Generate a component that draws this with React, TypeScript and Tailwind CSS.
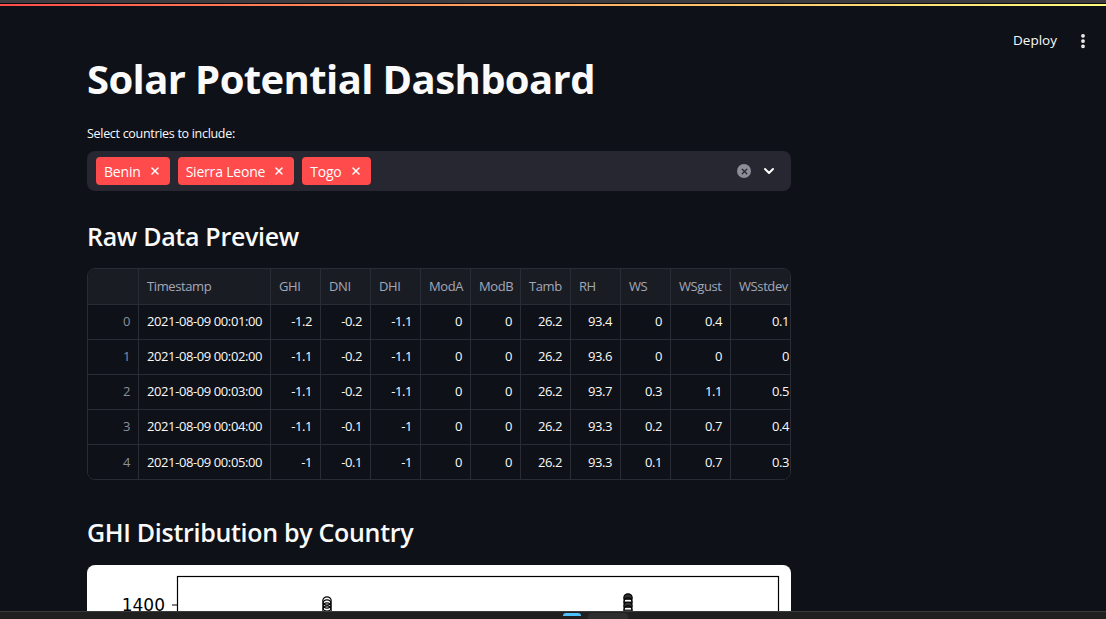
import { X, ChevronDown, EllipsisVertical } from 'lucide-react';

const columns = [
    { key: 'idx', label: '', w: 'w-[51px]' },
    { key: 'Timestamp', label: 'Timestamp', w: 'w-[132px]' },
    { key: 'GHI', label: 'GHI', w: 'w-[50px]' },
    { key: 'DNI', label: 'DNI', w: 'w-[50px]' },
    { key: 'DHI', label: 'DHI', w: 'w-[50px]' },
    { key: 'ModA', label: 'ModA', w: 'w-[50px]' },
    { key: 'ModB', label: 'ModB', w: 'w-[50px]' },
    { key: 'Tamb', label: 'Tamb', w: 'w-[50px]' },
    { key: 'RH', label: 'RH', w: 'w-[50px]' },
    { key: 'WS', label: 'WS', w: 'w-[50px]' },
    { key: 'WSgust', label: 'WSgust', w: 'w-[60px]' },
    { key: 'WSstdev', label: 'WSstdev', w: 'w-[66px]' },
];

const rows = [
    ['0', '2021-08-09 00:01:00', '-1.2', '-0.2', '-1.1', '0', '0', '26.2', '93.4', '0', '0.4', '0.1'],
    ['1', '2021-08-09 00:02:00', '-1.1', '-0.2', '-1.1', '0', '0', '26.2', '93.6', '0', '0', '0'],
    ['2', '2021-08-09 00:03:00', '-1.1', '-0.2', '-1.1', '0', '0', '26.2', '93.7', '0.3', '1.1', '0.5'],
    ['3', '2021-08-09 00:04:00', '-1.1', '-0.1', '-1', '0', '0', '26.2', '93.3', '0.2', '0.7', '0.4'],
    ['4', '2021-08-09 00:05:00', '-1', '-0.1', '-1', '0', '0', '26.2', '93.3', '0.1', '0.7', '0.3'],
];

const countries = ['Benin', 'Sierra Leone', 'Togo'];

const Tag = ({ name }: { name: string }) => (
    <div className="flex items-center h-[28px] pl-[8px] pr-[9px] rounded-[4px] bg-[#ff4b4b] text-white text-[14px] tracking-[-0.2px]">
        <span>{name}</span>
        <X size={12} strokeWidth={3} className="ml-[8px]" />
    </div>
);

const DataTable = () => (
    <div className="w-[704px] h-[212px] overflow-hidden rounded-[8px] border border-[#2a2c35] text-[13px] tracking-[-0.4px] whitespace-nowrap">
        <div className="flex h-[36px] bg-[#1a1c24] border-b border-[#2a2c35]">
            {columns.map((c, i) => (
                <div
                    key={c.key}
                    className={`${c.w} shrink-0 flex items-center px-[8px] overflow-hidden text-[#a3a8b8] ${i < columns.length - 1 ? 'border-r border-[#2a2c35]' : ''}`}
                >
                    {c.label}
                </div>
            ))}
        </div>
        {rows.map((r, ri) => (
            <div key={ri} className={`flex h-[35px] bg-[#0e1117] ${ri < rows.length - 1 ? 'border-b border-[#2a2c35]' : ''}`}>
                {r.map((v, ci) => (
                    <div
                        key={ci}
                        className={`${columns[ci].w} shrink-0 flex items-center px-[8px] overflow-hidden ${ci === 1 ? 'justify-start' : 'justify-end'} ${ci === 0 ? 'text-[#8b8f9c]' : 'text-[#fafafa]'} ${ci < r.length - 1 ? 'border-r border-[#2a2c35]' : ''}`}
                    >
                        {v}
                    </div>
                ))}
            </div>
        ))}
    </div>
);

const ChartPreview = () => (
    <div className="w-[704px] h-[60px] bg-white rounded-t-[8px] overflow-hidden">
        <svg width="704" height="60" viewBox="0 0 704 60">
            <rect x="90.5" y="11.5" width="601" height="60" fill="none" stroke="#000" strokeWidth="1.2" />
            <line x1="85" y1="40" x2="90" y2="40" stroke="#000" strokeWidth="1.2" />
            <text x="78" y="46" textAnchor="end" fontSize="17" fontFamily="DejaVu Sans, sans-serif" fill="#000">1400</text>
            <g fill="none" stroke="#000" strokeWidth="1.2">
                <circle cx="240" cy="36" r="4.2" />
                <circle cx="240" cy="39" r="4.2" />
                <circle cx="240" cy="42" r="4.2" />
                <circle cx="240" cy="45" r="4.2" />
            </g>
            <g stroke="#000" strokeWidth="1.2" fill="#333">
                <circle cx="541" cy="33" r="4.2" />
                <circle cx="541" cy="37" r="4.2" />
                <circle cx="541" cy="41" r="4.2" />
                <circle cx="541" cy="45" r="4.2" />
            </g>
            <g fill="#fff">
                <rect x="538" y="35" width="6" height="1.5" />
                <rect x="538" y="43" width="6" height="1.5" />
            </g>
        </svg>
    </div>
);

const App = () => {
    return (
        <div className="relative w-[1106px] h-[619px] overflow-hidden bg-[#0e1117] text-[#fafafa] font-['Open_Sans',sans-serif]">
            {/* window strip + streamlit decoration */}
            <div className="h-[3px] bg-[#3b3b40]" />
            <div className="h-[1px] bg-[#0b0b0d]" />
            <div className="h-[2px] bg-gradient-to-r from-[#ff4b4b] to-[#fffd80]" />

            {/* header */}
            <div className="flex justify-end items-center h-[54px] pr-[14px]">
                <span className="text-[13.5px] mr-[17px] mt-[15px]">Deploy</span>
                <EllipsisVertical size={18} strokeWidth={3} className="mt-[15px]" />
            </div>

            <div className="ml-[87px] w-[704px]">
                <h1 className="text-[40px] font-bold leading-[52px] tracking-[-0.6px] -mt-[7px]">Solar Potential Dashboard</h1>

                <div className="mt-[19px] text-[12.5px] leading-[20px] tracking-[-0.3px]">Select countries to include:</div>
                <div className="mt-[7px] h-[40px] rounded-[8px] bg-[#262730] flex items-center pl-[9px] pr-[14px]">
                    <div className="flex gap-[8px]">
                        {countries.map(c => <Tag key={c} name={c} />)}
                    </div>
                    <div className="ml-auto flex items-center gap-[10px]">
                        <div className="w-[14px] h-[14px] rounded-full bg-[#8c8e99] flex items-center justify-center">
                            <X size={9} strokeWidth={3.5} className="text-[#262730]" />
                        </div>
                        <ChevronDown size={16} strokeWidth={3} className="text-white" />
                    </div>
                </div>

                <h2 className="mt-[29px] text-[25px] font-semibold leading-[32px] tracking-[-0.3px]">Raw Data Preview</h2>
                <div className="mt-[16px]">
                    <DataTable />
                </div>

                <h2 className="mt-[36px] text-[25px] font-semibold leading-[32px] tracking-[-0.3px]">GHI Distribution by Country</h2>
                <div className="mt-[17px]">
                    <ChartPreview />
                </div>
            </div>

            {/* taskbar edge */}
            <div className="absolute left-0 right-0 bottom-0 h-[8px] bg-[#202020] border-t border-[#3a3a3a]">
                <div className="absolute left-[563px] top-[1px] w-[18px] h-[3px] rounded-t bg-[#4cc2ff]" />
                <div className="absolute left-[588px] top-[1px] w-[40px] h-[7px] rounded-t bg-[#2e2e2e]" />
            </div>
        </div>
    );
};

export default App;
